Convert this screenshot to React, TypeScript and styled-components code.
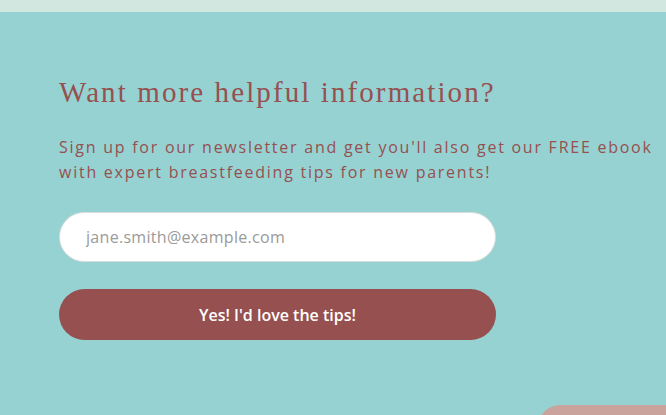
import styled, { createGlobalStyle } from "styled-components";

const GlobalStyle = createGlobalStyle`
  html, body {
    margin: 0;
    padding: 0;
    background: #97d2d3;
    overflow: hidden;
  }
`;

const Page = styled.div`
  width: 666px;
  height: 415px;
  position: relative;
  overflow: hidden;
  background: #97d2d3;
`;

const TopStrip = styled.div`
  height: 12px;
  background: #d3e7e1;
`;

const Signup = styled.section`
  padding: 63px 0 0 59px;
  display: flex;
  flex-direction: column;
`;

const Heading = styled.h2`
  margin: 0;
  font-family: "Liberation Serif", "DejaVu Serif", serif;
  font-weight: 400;
  font-size: 29px;
  line-height: 34px;
  letter-spacing: 2.1px;
  color: #95504f;
`;

const Blurb = styled.p`
  margin: 26px 0 0;
  font-family: "Open Sans", "Liberation Sans", sans-serif;
  font-size: 16px;
  line-height: 25px;
  letter-spacing: 1.75px;
  color: #95504f;
  white-space: nowrap;
`;

const Form = styled.form`
  margin-top: 27px;
  width: 437px;
  display: flex;
  flex-direction: column;
  gap: 27px;
`;

const EmailInput = styled.input`
  box-sizing: border-box;
  height: 50px;
  width: 100%;
  border: 1px solid #d9dcdc;
  border-radius: 25px;
  background: #fff;
  padding: 0 26px;
  font-family: "Open Sans", "Liberation Sans", sans-serif;
  font-size: 16px;
  letter-spacing: 0.3px;
  color: #555;
  outline: none;

  &::placeholder {
    color: #9a9a9a;
  }
`;

const SubmitButton = styled.button`
  height: 51px;
  width: 100%;
  border: none;
  border-radius: 26px;
  background: #96504f;
  color: #fff;
  font-family: "Open Sans", "Liberation Sans", sans-serif;
  font-weight: 600;
  font-size: 16px;
  cursor: pointer;
`;

const CornerTab = styled.div`
  position: absolute;
  left: 538px;
  top: 405px;
  width: 160px;
  height: 40px;
  border-radius: 22px 0 0 0;
  background: #c9a39c;
`;

export default function App() {
  return (
    <Page>
      <GlobalStyle />
      <TopStrip />
      <Signup>
        <Heading>Want more helpful information?</Heading>
        <Blurb>
          Sign up for our newsletter and get you'll also get our FREE ebook
          <br />
          with expert breastfeeding tips for new parents!
        </Blurb>
        <Form onSubmit={(e) => e.preventDefault()}>
          <EmailInput type="email" placeholder="jane.smith@example.com" />
          <SubmitButton type="submit">Yes! I'd love the tips!</SubmitButton>
        </Form>
      </Signup>
      <CornerTab />
    </Page>
  );
}
